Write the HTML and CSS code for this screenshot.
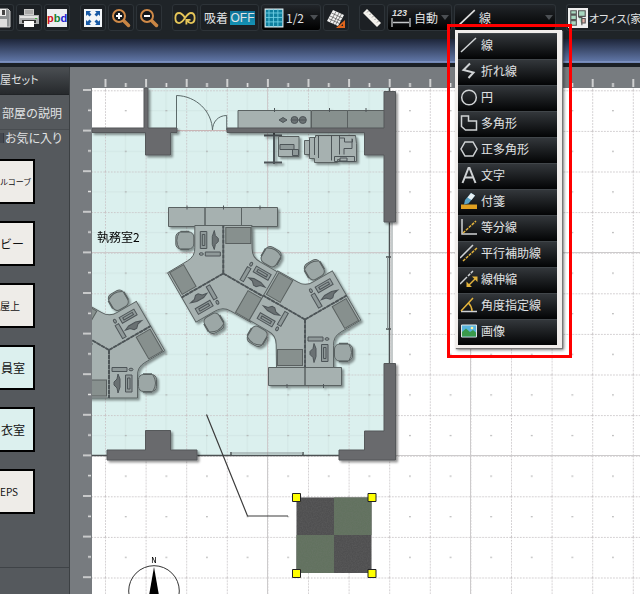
FILE: index.html
```html
<!DOCTYPE html>
<html lang="ja">
<head>
    <meta charset="UTF-8">
    <meta name="viewport" content="width=device-width, initial-scale=1.0">
    <title>レイアウトエディタ</title>
    <link rel="stylesheet" href="styles.css">
</head>
<body>
    <header class="toolbar">
        <div class="tool-group">
            <button type="button" class="tool-btn tool-btn-edge" aria-label="保存">
                <svg class="icon" viewBox="0 0 20 20"><path d="M1 1h16l2 2v16H1z" fill="#8d9193" stroke="#ccc"/><path d="M5 1h10v7H5z" fill="#eee"/><path d="M11 2h3v5h-3z" fill="#444"/><path d="M4 11h12v8H4z" fill="#ddd"/></svg>
            </button>
            <button type="button" class="tool-btn" aria-label="印刷">
                <svg class="icon" viewBox="0 0 20 20"><path d="M5 1h10v7H5z" fill="#ccc"/><path d="M6 3h8M6 5h8" stroke="#888"/><path d="M0 7h20v9H0z" fill="#aeb0b1"/><path d="M1 8h18v2H1z" fill="#e2e2e2"/><path d="M3 12h14v3H3z" fill="#333"/><path d="M5 13h10v6H5z" fill="#fff"/><path d="M16 10h2v1h-2z" fill="#4b4"/></svg>
            </button>
            <button type="button" class="tool-btn" aria-label="pbd">
                <span class="pbd"><b class="pbd-p">p</b><b class="pbd-b">b</b><b class="pbd-d">d</b></span>
            </button>
        </div>
        <div class="tool-group">
            <button type="button" class="tool-btn" aria-label="全体表示">
                <svg class="icon" viewBox="0 0 20 20"><path d="M1 1h18v18H1z" fill="#f2f5f8"/><g fill="#1759a5"><path d="M3 3h5L6.500 4.500l2 2-2 2-2-2L3 8z"/><path d="M17 3h-5l1.500 1.500-2 2 2 2 2-2L17 8z"/><path d="M3 17h5l-1.500-1.500 2-2-2-2-2 2L3 12z"/><path d="M17 17h-5l1.500-1.500-2-2 2-2 2 2L17 12z"/></g></svg>
            </button>
            <button type="button" class="tool-btn" aria-label="拡大">
                <svg class="icon" viewBox="0 0 20 20"><path d="M12.500 12.500l5 5" stroke="#c98544" stroke-width="3.500" stroke-linecap="round"/><circle cx="8" cy="8" r="6" fill="#15181b" stroke="#d08a48" stroke-width="2"/><path d="M8 5v6M5 8h6" stroke="#fff" stroke-width="2"/></svg>
            </button>
            <button type="button" class="tool-btn" aria-label="縮小">
                <svg class="icon" viewBox="0 0 20 20"><path d="M12.500 12.500l5 5" stroke="#c98544" stroke-width="3.500" stroke-linecap="round"/><circle cx="8" cy="8" r="6" fill="#15181b" stroke="#d08a48" stroke-width="2"/><path d="M5 8h6" stroke="#fff" stroke-width="2"/></svg>
            </button>
        </div>
        <div class="tool-group">
            <button type="button" class="tool-btn" aria-label="連続">
                <svg class="icon icon-wide" viewBox="0 0 24 20"><path d="M12 10C10 6.500 8 4.500 5.500 4.500 3 4.500 1.500 7 1.500 10S3 15.500 5.500 15.500C11 15.500 13 4.500 18.500 4.500 21 4.500 22.500 7 22.500 10S21 15.500 18.500 15.500C16.500 15.500 15 14 14 12.500M13.500 17v-5h4.500" fill="none" stroke="#e5c558" stroke-width="2"/></svg>
            </button>
            <button type="button" class="tool-btn tool-snap">吸着<span class="snap-state">OFF</span></button>
            <label class="tool-btn tool-select tool-grid">
                <svg class="icon" viewBox="0 0 18 18"><path d="M1 1h16v16H1z" fill="#0d7f9e" stroke="#dfeff3"/><path d="M4.500 1v16M8.500 1v16M12.500 1v16M1 4.500h16M1 8.500h16M1 12.500h16" stroke="#6fd0e4" stroke-width=".8"/></svg>
                <select aria-label="グリッド間隔"><option>1/2</option><option>1/4</option></select>
            </label>
            <button type="button" class="tool-btn" aria-label="グリッド編集">
                <svg class="icon" viewBox="0 0 20 20"><path d="M7 2l11 5-6 11L1 13z" fill="#f2f2f2"/><path d="M10 3.500L4 14.500M13 5L7 16M15.500 6L9.500 17M5.500 5l11 5M4 8l11 5M2.500 10.500l11 5" stroke="#555" stroke-width=".7"/><path d="M19 12v8h-9z" fill="#e0651d"/><path d="M17 16v2h-2z" fill="#222"/></svg>
            </button>
        </div>
        <div class="tool-group">
            <button type="button" class="tool-btn" aria-label="計測">
                <svg class="icon" viewBox="0 0 20 20"><path d="M5 1l14 14-4 4L1 5z" fill="#f3f1ec"/><path d="M6.500 3l-1.500 1.500M9 5.500L7.500 7M11.500 8L10 9.500M14 10.500L12.500 12M16.500 13L15 14.500" stroke="#999"/></svg>
            </button>
            <label class="tool-btn tool-select tool-auto">
                <svg class="icon icon-wide" viewBox="0 0 22 20"><text x="2" y="8" class="dim-text">123</text><path d="M2 10v9M20 10v9M3 14.500h16" fill="none" stroke="#c5c8ca" stroke-width="1.300"/></svg>
                <select aria-label="寸法"><option>自動</option><option>手動</option></select>
            </label>
            <div class="dropdown">
                <button type="button" class="tool-btn tool-line" id="lineBtn" aria-haspopup="menu" aria-expanded="true">
                    <svg class="icon" viewBox="0 0 18 18"><path d="M1 16L16 2" stroke="#ddd" stroke-width="1.500"/></svg>
                    <span>線</span>
                </button>
                <div class="menu" role="menu" aria-labelledby="lineBtn">
                    <button type="button" role="menuitem" class="menu-item"><svg class="icon" viewBox="0 0 18 18"><path d="M1 16L16 2" class="stroke"/></svg>線</button>
                    <button type="button" role="menuitem" class="menu-item"><svg class="icon" viewBox="0 0 18 18"><path d="M10 1.500L3.500 8l10 2.500L8.500 16" class="stroke thick"/></svg>折れ線</button>
                    <button type="button" role="menuitem" class="menu-item"><svg class="icon" viewBox="0 0 18 18"><circle cx="9" cy="9.500" r="7.300" class="stroke"/></svg>円</button>
                    <button type="button" role="menuitem" class="menu-item"><svg class="icon" viewBox="0 0 18 18"><path d="M1.500 2h7v5h8v9h-11l-4-3.500z" class="stroke"/></svg>多角形</button>
                    <button type="button" role="menuitem" class="menu-item"><svg class="icon" viewBox="0 0 18 18"><path d="M5 2h8l4 7-4 7H5L1 9z" class="stroke"/></svg>正多角形</button>
                    <button type="button" role="menuitem" class="menu-item"><svg class="icon" viewBox="0 0 18 18"><path d="M2.500 17L8.500 2h1l6 15M5 11.500h8" class="stroke thick"/></svg>文字</button>
                    <button type="button" role="menuitem" class="menu-item"><svg class="icon" viewBox="0 0 18 18"><path d="M1 12.500h16V17H1z" fill="#e0a020"/><path d="M11 1l4 2.500-6.500 8-4.500 1 1-4.500z" fill="#5aa3c4"/><path d="M11 1l4 2.500-3.500 4.500-4-2.500z" fill="#e9f1f4"/></svg>付箋</button>
                    <button type="button" role="menuitem" class="menu-item"><svg class="icon" viewBox="0 0 18 18"><path d="M2 1v15h15" class="stroke"/><path d="M3 15L16 3" class="stroke-y dashed"/></svg>等分線</button>
                    <button type="button" role="menuitem" class="menu-item"><svg class="icon" viewBox="0 0 18 18"><path d="M0 14L13 1" class="stroke"/><path d="M3 17L17 4" class="stroke-y dashed"/></svg>平行補助線</button>
                    <button type="button" role="menuitem" class="menu-item"><svg class="icon" viewBox="0 0 18 18"><path d="M0 14l7-7" class="stroke"/><path d="M8 6l5-5" class="stroke dashed"/><path d="M9 15l6-6" class="stroke-y"/><path d="M12 6.500h5.500V12zM6.500 11.500V17H12z" fill="#e4b43c"/></svg>線伸縮</button>
                    <button type="button" role="menuitem" class="menu-item"><svg class="icon" viewBox="0 0 18 18"><path d="M1 15.500h16" class="stroke"/><path d="M1 15L13 2M8.500 7c2 2 3.500 5 3.500 8" class="stroke-y"/></svg>角度指定線</button>
                    <button type="button" role="menuitem" class="menu-item"><svg class="icon" viewBox="0 0 18 18"><path d="M1.500 3h15v12h-15z" fill="#58b4dd" stroke="#dfe5e8"/><path d="M2 14.500V10l4-3.500L10 10l3-2 3 2.500v4z" fill="#3a9a4c"/><circle cx="12" cy="6" r="1.300" fill="#fff3a0"/></svg>画像</button>
                </div>
                <div class="menu-highlight"></div>
            </div>
        </div>
        <div class="tool-group tool-group-last">
            <button type="button" class="tool-btn tool-office">
                <svg class="icon" viewBox="0 0 18 18"><path d="M0 0h18v18H0z" fill="#eee"/><g fill="#a8d8c0" stroke="#555"><path d="M2.500 2.500h5v3h-5zM2.500 6.500h5v4h-5zM2.500 11.500h5v4h-5zM9.500 2.500h6v5h-6zM9.500 8.500h3v7"/><path d="M12.500 9.500h3v4h-3z" fill="#e6b0a6"/></g></svg>
                <span>オフィス(家</span>
            </button>
        </div>
    </header>
    <div class="band"></div>

    <main class="main">
        <aside class="sidebar">
            <h2 class="side-title">屋セット</h2>
            <a href="#" class="side-link">部屋の説明</a>
            <label class="side-check"><input type="checkbox">お気に入り</label>
            <div class="room-list">
                <button type="button" class="room room-long">ルコーブ</button>
                <button type="button" class="room">ビー</button>
                <button type="button" class="room room-small">屋上</button>
                <button type="button" class="room room-blue">員室</button>
                <button type="button" class="room room-blue">衣室</button>
                <button type="button" class="room room-small">EPS</button>
            </div>
            <div class="side-footer"></div>
        </aside>

        <section class="workspace">
            <svg class="ruler-top">
                <defs>
                    <pattern id="ticksX" x="34.500" width="40.600" height="21" patternUnits="userSpaceOnUse">
                        <path d="M1 12v8M21.300 16v4" stroke="#e4e4e4" stroke-width="1.600"/>
                    </pattern>
                </defs>
                <rect x="20" width="100%" height="21" fill="url(#ticksX)"/>
            </svg>
            <svg class="ruler-left">
                <defs>
                    <pattern id="ticksY" y="1" width="22" height="40.600" patternUnits="userSpaceOnUse">
                        <path d="M13 1h8M18 21.300h3" stroke="#e4e4e4" stroke-width="1.600"/>
                    </pattern>
                </defs>
                <rect width="22" height="100%" fill="url(#ticksY)"/>
            </svg>
            <svg class="canvas">
                <defs>
                    <pattern id="grid" x="105" y="90.300" width="40.600" height="40.600" patternUnits="userSpaceOnUse">
                        <path d="M.5 0v40.600M0 .5h40.600" stroke="#c9c5c7" stroke-dasharray="1.500 1.500"/>
                        <path d="M20 20.500h1.500" stroke="#a9a9a9" stroke-width="1.300"/>
                    </pattern>
                    <pattern id="gridHalf" x="105" y="90.300" width="40.600" height="40.600" patternUnits="userSpaceOnUse">
                        <path d="M20.500 0v40.600M0 20.500h40.600" stroke="#cfe2e1" stroke-width=".8"/>
                    </pattern>
                    <filter id="shadow" x="-10%" y="-10%" width="130%" height="130%">
                        <feDropShadow dx="2" dy="2" stdDeviation="1" flood-color="#000" flood-opacity=".4"/>
                    </filter>
                    <filter id="grain" x="0" y="0" width="100%" height="100%">
                        <feTurbulence type="fractalNoise" baseFrequency=".8" numOctaves="2"/>
                        <feColorMatrix values="0 0 0 0 .2  0 0 0 0 .2  0 0 0 0 .2  1 0 0 0 -.3"/>
                    </filter>

                    <!-- chair facing left -->
                    <g id="chair" class="part seat">
                        <rect x="-9.500" y="-8.500" width="18" height="17" rx="5"/>
                        <path d="M5-8q5 8 0 16" fill="none"/>
                        <path d="M-5-9h9M-5 9h9" stroke-width="1.500"/>
                    </g>

                    <!-- one 120 degree desk, workstation on the lower arm -->
                    <g id="desk">
                        <path class="top" d="M0 0V48H28.500V26Q28 17 36 12.500L55.800.700 41.600-24z"/>
                        <path class="part" d="M3 17.500h15v4H3zM16.500 25h6.500v17h-6.500z"/>
                        <path class="part" d="M18.500 28h2.500v11h-2.500z"/>
                        <ellipse class="part" cx="22" cy="19.500" rx="2" ry="1.300"/>
                        <path class="part dark" d="M9 24l2 5v8l-2 6-1-5-3-3v-3l3-3z"/>
                        <rect class="drawer" x="30" y="2.500" width="16" height="25" transform="rotate(-30)"/>
                        <use href="#chair" x="39" y="33"/>
                    </g>
                    <g id="cluster">
                        <use href="#desk"/>
                        <use href="#desk" transform="rotate(120)"/>
                        <use href="#desk" transform="rotate(240)"/>
                        <path class="screen" d="M0 0V48M0 0L41.600-24M0 0L-41.600-24"/>
                    </g>
                </defs>

                <!-- drawing coordinates start at 92, 88 -->
                <g transform="translate(-92 -88)">
                    <rect class="floor" x="92" y="88" width="298" height="367"/>
                    <rect x="92" y="88" width="298" height="367" fill="url(#gridHalf)"/>
                    <rect x="92" y="88" width="52" height="41" fill="#fff"/>
                    <rect x="92" y="88" width="100%" height="100%" fill="url(#grid)"/>
                    <path d="M267.500 88v2000M470.500 88v2000M92 252.500h2000M92 455.500h2000" stroke="#cdcbcc"/>

                    <!-- windows -->
                    <path class="window" d="M389.500 88v5M389.500 222v142M92 455.500h298M231 452v4M303 452v4M386 257h5M386 329h5"/>
                    <path d="M392 222v142M232 453h71M387.500 257v72" stroke="#8b9596"/>

                    <!-- entrance door -->
                    <path class="door" d="M176.500 130V95.500C196 96 212 111 212.500 130.500 212.500 122 218 115.500 226.700 115.500V130"/>
                    <path d="M177 130.500h50" stroke="#c9b5b5"/>

                    <g class="furniture" filter="url(#shadow)">
                        <path class="top" d="M238 110.500h73v18h-73z"/>
                        <path class="drawer" d="M311.500 110.500h36v18h-36zM347.500 110.500h37v18h-37z"/>
                        <path class="part" d="M274.500 108v4M329.500 108v4M366 108v4"/>
                        <path class="part dark" d="M279 120l4-2.500 4 2.500-4 2.500z"/>
                        <circle class="part dark" cx="294.500" cy="120" r="3.500"/>
                        <circle class="part dark" cx="302.800" cy="120" r="3.500"/>
                        <path class="part" d="M291 120h15"/>

                        <path class="part bar" d="M264 135.500h18M264 162.500h18M274 133v31"/>
                        <path class="top" d="M278.500 136.500h20.500v20h-20.500z"/>
                        <path class="part" d="M280 144.500h14v5h-14zM292.500 149.500h6v6h-6z"/>
                        <path class="top" d="M304.500 140.500h5v-3h6v-2h40l1 8v18h-17v-2h-2v3h-23v-4h-5v-4h-5z"/>
                        <path class="part-line" d="M309.500 139v16M314.500 137v18M318.500 136v22M331.500 135.500v25M339.500 135.500v19M339.500 138h5v4h8v-3M344 154.500v-6h8v-10M334.500 156.500h20v5h-20zM340 158h7v3h-7z"/>

                        <path class="top" d="M168.500 207.500h36.500v19h-36.500zM205 207.500h36.500v19h-36.500zM241.500 207.500h36v19h-36z"/>
                        <path class="part" d="M187 205.500v4M223.500 205.500v4M260 205.500v4"/>
                        <path class="top" d="M268.500 367.500h36.500v18h-36.500zM305 367.500h36.500v18h-36.500z"/>
                        <path class="part" d="M287 384v4M323.500 384v4"/>

                        <use href="#cluster" transform="translate(223.300 273.500) rotate(180)"/>
                        <use href="#cluster" transform="translate(305 319.500)"/>
                        <use href="#cluster" transform="translate(109 350)"/>
                    </g>

                    <g class="wall" filter="url(#shadow)">
                        <path d="M144 88h4v40h29v4.500h-6.500V155h-25v-22.500H92V128h52z"/>
                        <path d="M227 128h157V91.500h11.500V222H384v-67h-19.500v-22.500H227z"/>
                        <path d="M107 450h38.500v-19.500h25V450H197v10h-90z"/>
                        <path d="M384 363.500h11.500V460H339v-10h25.500v-19H384z"/>
                    </g>

                    <text class="room-name" x="97" y="242">執務室2</text>

                    <path class="leader" d="M206.500 414.500l41 101.500h40.500"/>

                    <!-- carpet tile with selection handles -->
                    <path d="M296.500 497.500h75v75.500h-75z" fill="#4f4f50"/>
                    <path d="M334 497.500h37.500V535h-75v38H334z" fill="#62725f"/>
                    <rect x="296.500" y="497.500" width="75" height="75.500" filter="url(#grain)" opacity=".4"/>
                    <path class="handle" d="M292.500 493.500h8v8h-8zM368 493.500h8v8h-8zM292.500 569.500h8v8h-8zM368 569.500h8v8h-8z"/>

                    <!-- compass -->
                    <circle cx="154" cy="591" r="25.300" fill="none" stroke="#333"/>
                    <path d="M154 567l7 40h-14z" fill="#000"/>
                    <text class="north" x="154" y="563">N</text>
                </g>
            </svg>
        </section>
    </main>
</body>
</html>
```

FILE: styles.css
```css
* {
    margin: 0;
    padding: 0;
    box-sizing: border-box;
}

body {
    font-family: "Noto Sans CJK JP", "Liberation Sans", sans-serif;
    font-size: 12px;
    line-height: 16px;
    color: #e0e2e3;
    background: #1f2428;
    height: 100vh;
    display: flex;
    flex-direction: column;
    overflow: hidden;
}

button,
select {
    font: inherit;
    color: inherit;
}

/* Toolbar */
.toolbar {
    display: flex;
    gap: 10px;
    height: 39px;
    padding-top: 4px;
    background: #1f2428;
}

.tool-group {
    display: flex;
    flex: none;
    gap: 2px;
}

.tool-group-last {
    flex: 1;
    min-width: 0;
}

.tool-btn {
    display: flex;
    align-items: center;
    justify-content: center;
    flex: none;
    width: 26px;
    height: 27px;
    border: 1px solid #2d3338;
    border-radius: 3px;
    background: #1c2024;
    white-space: nowrap;
    overflow: hidden;
    cursor: pointer;
}

.tool-btn-edge {
    width: 14px;
    justify-content: flex-end;
    border-left: none;
    border-radius: 0 3px 3px 0;
    padding-right: 2px;
}

.icon {
    flex: none;
    width: 20px;
    height: 20px;
}

.icon-wide {
    width: 22px;
}

.pbd {
    display: flex;
    justify-content: center;
    width: 20px;
    height: 18px;
    background: #eceef0;
    font-family: "Liberation Sans", sans-serif;
    font-size: 11px;
    line-height: 18px;
}

.pbd-p {
    color: #d01020;
}

.pbd-b {
    color: #108030;
}

.pbd-d {
    color: #2020d0;
}

.tool-snap {
    width: 59px;
    gap: 2px;
}

.snap-state {
    width: 25px;
    height: 14px;
    background: linear-gradient(#0d6e94, #1593b5);
    font-family: "Liberation Sans", sans-serif;
    font-size: 12px;
    line-height: 14px;
}

.tool-select,
.tool-line {
    justify-content: flex-start;
    gap: 2px;
    padding-left: 2px;
    background: linear-gradient(#22262a, #000);
}

.tool-select select {
    flex: 1;
    min-width: 0;
    appearance: none;
    border: none;
    background: none;
    outline: none;
}

.tool-select::after,
.tool-line::after {
    content: "";
    flex: none;
    margin-left: auto;
    margin-right: 2px;
    border: 4px solid transparent;
    border-top: 5px solid #4b4f53;
    border-bottom: none;
}

.tool-grid {
    width: 60px;
}

.tool-auto {
    width: 65px;
}

.dim-text {
    font: italic bold 9px "Liberation Sans", sans-serif;
    fill: #ddd;
}

.tool-line {
    width: 102px;
}

.tool-office {
    flex: 1;
    min-width: 0;
    justify-content: flex-start;
    gap: 1px;
    padding-left: 1px;
    border-right: none;
    border-radius: 3px 0 0 3px;
    font-size: 11px;
    font-feature-settings: "palt";
}

/* Open line menu */
.dropdown {
    position: relative;
}

.menu {
    position: absolute;
    z-index: 2;
    top: 26px;
    left: 1px;
    width: 107px;
    border: 3px solid #f1eeec;
    border-right-width: 5px;
    box-shadow: 1px 1px 1px #777, 2px 2px 3px rgba(0, 0, 0, 0.5);
}

.menu-item {
    display: flex;
    align-items: center;
    gap: 3px;
    width: 100%;
    height: 26px;
    padding: 0 0 3px 2px;
    border: none;
    border-top: 1px solid #41464a;
    background: linear-gradient(#33373b, #030405);
    text-align: left;
    cursor: pointer;
}

.menu-item .icon {
    width: 18px;
    height: 18px;
}

.stroke,
.stroke-y {
    fill: none;
    stroke: #cfd2d4;
    stroke-width: 1.5;
}

.stroke-y {
    stroke: #e4b43c;
}

.thick {
    stroke-width: 2;
}

.dashed {
    stroke-dasharray: 3 1;
}

.menu-highlight {
    position: absolute;
    z-index: 3;
    top: 20px;
    left: -7px;
    width: 125px;
    height: 334px;
    border: 3px solid #f00;
    pointer-events: none;
}

.band {
    flex: none;
    height: 28px;
    background: linear-gradient(#1e263a, #5f75a5 22px, #8094c2 22px, #6e83b3 24px, #1b2025 24px);
}

/* Main area */
.main {
    flex: 1;
    display: flex;
    min-height: 0;
}

.sidebar {
    flex: none;
    display: flex;
    flex-direction: column;
    width: 70px;
    background: #55595d;
    border-right: 1px solid #3c4043;
    overflow: hidden;
    white-space: nowrap;
}

.side-title {
    height: 28px;
    border-bottom: 1px solid #202326;
    background: linear-gradient(#4b4f53, #26292c);
    font-size: 11px;
    font-weight: normal;
    line-height: 24px;
    font-feature-settings: "palt";
}

.side-link {
    height: 35px;
    padding-left: 2px;
    border-bottom: 1px solid #484c50;
    color: inherit;
    line-height: 35px;
    text-decoration: none;
}

.side-check {
    display: flex;
    align-items: center;
    gap: 1px;
    height: 16px;
    font-feature-settings: "palt";
}

.side-check input {
    appearance: none;
    width: 4px;
    height: 10px;
    background: #44484f;
    border-right: 1px solid #363a44;
}

.room-list {
    display: flex;
    flex-direction: column;
    align-items: flex-start;
    gap: 17px;
    padding-top: 13px;
}

.room {
    width: 35px;
    height: 45px;
    border: 2px solid #000;
    border-left: none;
    background: #eeece8;
    color: #111;
    text-align: left;
    white-space: nowrap;
    overflow: hidden;
    cursor: pointer;
}

.room-small {
    font-size: 10px;
}

.room-long {
    font-size: 8px;
}

.room-blue {
    padding-left: 1px;
    background: #dcf0ee;
}

.side-footer {
    flex: 1;
    margin-top: 53px;
    border-top: 1px solid #3f4347;
}

/* Drawing area */
.workspace {
    flex: 1;
    display: grid;
    grid-template-columns: 22px 1fr;
    grid-template-rows: 21px 1fr;
    min-width: 0;
    background: #777b7f;
}

.ruler-top {
    grid-column: 1 / 3;
    width: 100%;
    height: 21px;
}

.ruler-left {
    width: 22px;
    height: 100%;
}

.canvas {
    width: 100%;
    height: 100%;
    background: #fff;
}

.floor {
    fill: #dbf0ee;
}

.wall {
    fill: #696b6d;
    stroke: #55585a;
}

.window {
    fill: none;
    stroke: #4b5052;
    stroke-width: 1.5;
}

.door {
    fill: none;
    stroke: #5c6a6a;
}

.top {
    fill: #a6b1b0;
    stroke: #5a6262;
}

.drawer {
    fill: #87908e;
    stroke: #5a6160;
}

.part {
    fill: #8f9999;
    stroke: #4e5558;
}

.part-line {
    fill: none;
    stroke: #4e5558;
}

.seat {
    fill: #9ca7a6;
    stroke: #5a6262;
}

.dark {
    fill: #6a7173;
}

.bar {
    stroke-width: 2;
}

.screen {
    fill: none;
    stroke: #4e5558;
    stroke-width: 2;
    stroke-dasharray: 4 1;
}

.leader {
    fill: none;
    stroke: #3c3c3c;
    stroke-width: 1.2;
}

.handle {
    fill: #ff0;
    stroke: #222;
}

.room-name {
    font-size: 12px;
    fill: #000;
}

.north {
    font: 9px "Liberation Mono", monospace;
    text-anchor: middle;
    fill: #000;
}
```
